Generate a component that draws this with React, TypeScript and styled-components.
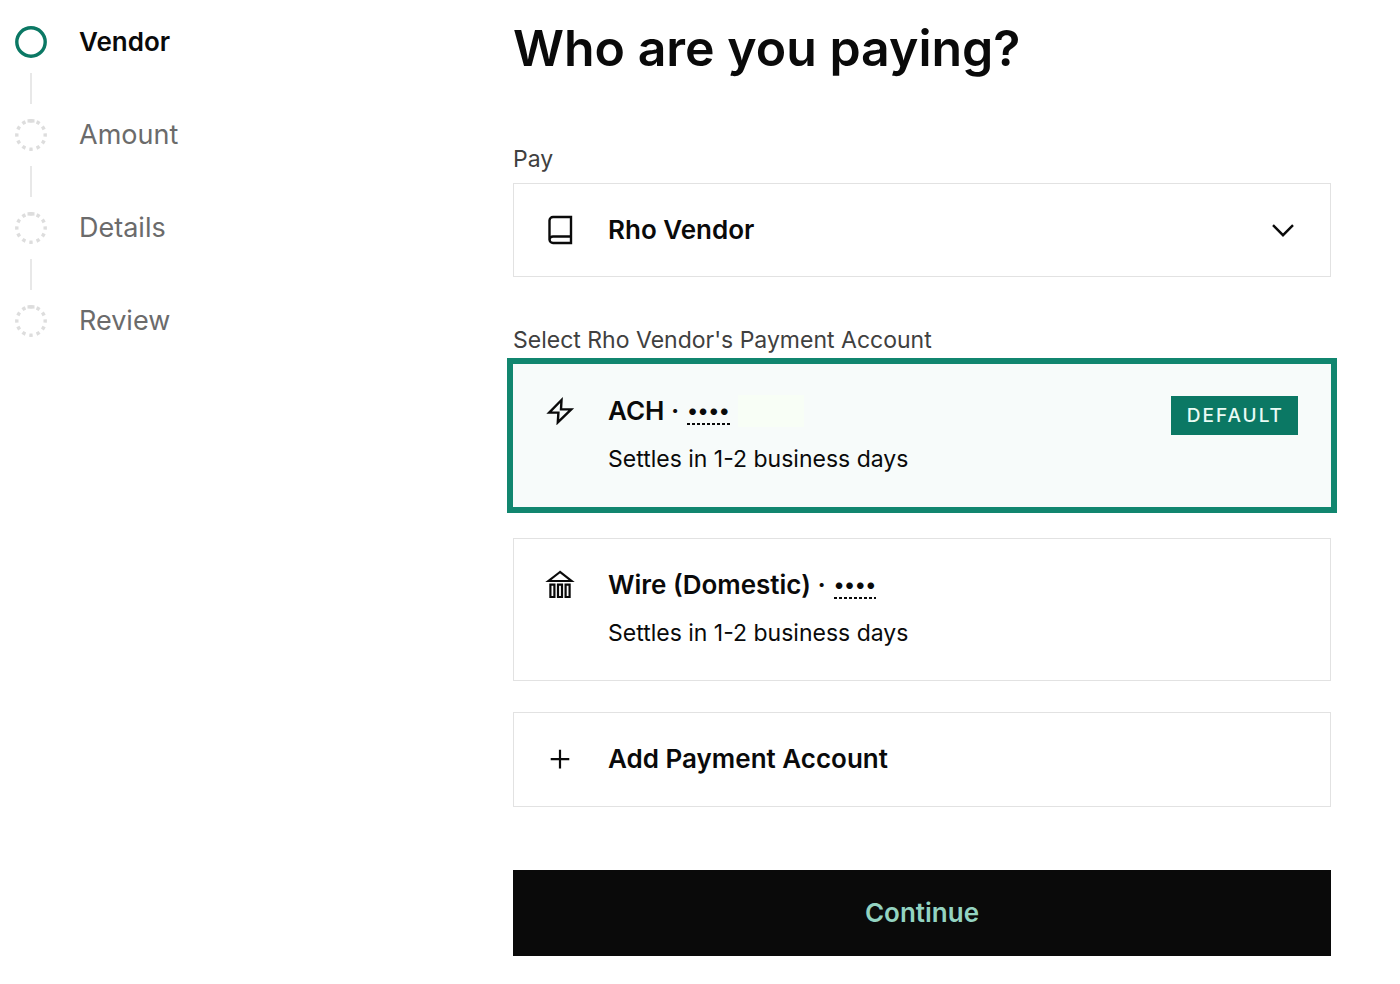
import React, { useState } from "react";
import styled, { createGlobalStyle } from "styled-components";

const GlobalStyle = createGlobalStyle`
  *, *::before, *::after { box-sizing: border-box; }
  body {
    margin: 0;
    background: #ffffff;
    color: #0a0a0a;
    font-family: Inter, "Liberation Sans", sans-serif;
  }
  button, input, select { font: inherit; color: inherit; }
`;

const Page = styled.div`
  display: grid;
  grid-template-columns: 498px minmax(0, 1fr);
  padding: 16px 69px 28px 15px;
`;

const Stepper = styled.ol`
  list-style: none;
  margin: 0;
  padding: 10px 0 0;
`;

const Step = styled.li<{ $current?: boolean }>`
  display: grid;
  grid-template-columns: 32px auto;
  column-gap: 32px;
  justify-content: start;
  align-items: center;
  font-size: ${(p) => (p.$current ? 26 : 27)}px;
  line-height: 32px;
  font-weight: ${(p) => (p.$current ? 600 : 400)};
  color: ${(p) => (p.$current ? "#0a0a0a" : "#6b6b6b")};
`;

const Connector = styled.span`
  width: 2px;
  height: 31px;
  margin: 15px;
  background: #e8e8e8;
`;

const Form = styled.form`
  display: flex;
  flex-direction: column;
`;

const Title = styled.h1`
  margin: 0 0 65px;
  font-size: 50px;
  line-height: 64px;
  font-weight: 600;
`;

const Caption = styled.label`
  margin-bottom: 10px;
  font-size: 23px;
  line-height: 28px;
  color: #404040;
`;

const Group = styled.fieldset`
  display: flex;
  flex-direction: column;
  gap: 31px;
  min-width: 0;
  margin: 49px 0 63px;
  padding: 0;
  border: 0;
`;

const GroupCaption = styled(Caption).attrs({ as: "legend" })`
  padding: 0;
`;

const panel = `
  display: flex;
  gap: 33px;
  border: 1px solid #e2e2e2;
  background: #ffffff;
  padding: 30px 32px 30px 31px;
`;

const SelectBox = styled.div`
  ${panel}
  align-items: center;
`;

const Select = styled.select`
  flex: 1;
  min-width: 0;
  appearance: none;
  border: 0;
  padding: 0;
  background: transparent;
  font-size: 26px;
  line-height: 32px;
  font-weight: 600;
`;

const AccountCard = styled.label<{ $selected: boolean }>`
  ${panel}
  padding-bottom: 31px;
  cursor: pointer;
  ${(p) =>
    p.$selected &&
    `
    border-color: transparent;
    background: #f7fbfa;
    box-shadow: 0 0 0 6px #11866f;
  `}
`;

const Radio = styled.input`
  position: absolute;
  opacity: 0;
  pointer-events: none;
`;

const AccountText = styled.span`
  flex: 1;
  display: flex;
  flex-direction: column;
  gap: 16px;
`;

const AccountName = styled.span`
  display: flex;
  align-items: center;
  gap: 8px;
  font-size: 26px;
  line-height: 32px;
  font-weight: 600;
`;

const Mask = styled.span`
  display: flex;
  height: 28px;
  align-items: center;
  font-size: 21px;
  background: repeating-linear-gradient(90deg, #0a0a0a 0 3px, transparent 3px 5px) left bottom / 100% 2px no-repeat;
`;

const Redacted = styled.span`
  width: 66px;
  height: 32px;
  background: #f8fef6;
`;

const Timing = styled.span`
  font-size: 23px;
  line-height: 32px;
`;

const Badge = styled.span`
  align-self: flex-start;
  padding: 0 14px 0 16px;
  margin-top: 1px;
  background: #0b7864;
  color: #e9fbf5;
  font-size: 19px;
  line-height: 39px;
  font-weight: 500;
  letter-spacing: 2px;
`;

const AddButton = styled.button`
  ${panel}
  align-items: center;
  padding-bottom: 31px;
  font-size: 26px;
  line-height: 32px;
  font-weight: 600;
  text-align: left;
  cursor: pointer;
`;

const ContinueButton = styled.button`
  border: 0;
  padding: 27px;
  background: #0a0a0a;
  color: #93d3c1;
  font-size: 26px;
  line-height: 32px;
  font-weight: 600;
  cursor: pointer;
`;

const IconSvg = styled.svg`
  flex: none;
  width: 30px;
  height: 30px;
  fill: none;
  stroke: currentColor;
  stroke-width: 2;
`;

const Icon = ({ children }: { children: React.ReactNode }) => (
  <IconSvg viewBox="0 0 30 30" aria-hidden="true">
    {children}
  </IconSvg>
);

const BookIcon = () => (
  <Icon>
    <path
      strokeWidth="2.4"
      d="M4.5 25a3.5 3.5 0 0 1 3.5-3.5h18M8 2h18V28H8a3.5 3.5 0 0 1-3.5-3.5V5.5A3.5 3.5 0 0 1 8 2z"
    />
  </Icon>
);

const ChevronIcon = () => (
  <Icon>
    <path strokeWidth="2.4" d="M5 10.2 15 20.2 25 10.2" />
  </Icon>
);

const BoltIcon = () => (
  <Icon>
    <path strokeWidth="2.4" d="M16.5 5 4.2 17.6H13.4L12.8 27.4 26.2 14.4H16z" />
  </Icon>
);

const BankIcon = () => (
  <Icon>
    <path strokeWidth="2.2" d="M15 3 3.5 12H26.5z" />
    <path strokeWidth="2.2" d="M5.4 15.6h4v12.4h-4zM13 15.6h4v12.4h-4zM20.6 15.6h4v12.4h-4z" />
  </Icon>
);

const PlusIcon = () => (
  <Icon>
    <path strokeWidth="2.2" d="M15 5.8v18.6M5.7 15.1h18.6" />
  </Icon>
);

const StepMark = ({ current }: { current: boolean }) => (
  <svg width="32" height="32" viewBox="0 0 32 32" fill="none" aria-hidden="true">
    {current ? (
      <circle cx="16" cy="16" r="14.2" stroke="#0b7864" strokeWidth="3.4" />
    ) : (
      <>
        <circle
          cx="16"
          cy="16"
          r="14.2"
          stroke="#dddddd"
          strokeWidth="3.4"
          pathLength="360"
          strokeDasharray="14 16"
          strokeDashoffset="7"
        />
        <path d="M12.5 1.9h7" stroke="#dddddd" strokeWidth="3.4" />
      </>
    )}
  </svg>
);

const steps = ["Vendor", "Amount", "Details", "Review"];

const accounts = [
  { id: "ach", name: "ACH", icon: <BoltIcon />, isDefault: true },
  { id: "wire", name: "Wire (Domestic)", icon: <BankIcon />, isDefault: false },
];

export default function App() {
  const [account, setAccount] = useState("ach");

  return (
    <>
      <GlobalStyle />
      <Page>
        <nav aria-label="Progress">
          <Stepper>
            {steps.map((name, i) => (
              <Step key={name} $current={i === 0} aria-current={i === 0 ? "step" : undefined}>
                <StepMark current={i === 0} />
                <span>{name}</span>
                {i < steps.length - 1 && <Connector />}
              </Step>
            ))}
          </Stepper>
        </nav>

        <Form onSubmit={(e) => e.preventDefault()}>
          <Title>Who are you paying?</Title>

          <Caption htmlFor="vendor">Pay</Caption>
          <SelectBox>
            <BookIcon />
            <Select id="vendor">
              <option>Rho Vendor</option>
            </Select>
            <ChevronIcon />
          </SelectBox>

          <Group>
            <GroupCaption>Select Rho Vendor's Payment Account</GroupCaption>
            {accounts.map((a) => (
              <AccountCard key={a.id} $selected={account === a.id}>
                <Radio
                  type="radio"
                  name="account"
                  value={a.id}
                  checked={account === a.id}
                  onChange={() => setAccount(a.id)}
                />
                {a.icon}
                <AccountText>
                  <AccountName>
                    <span>{a.name} ·</span>
                    <Mask>••••</Mask>
                    {a.isDefault && <Redacted />}
                  </AccountName>
                  <Timing>Settles in 1-2 business days</Timing>
                </AccountText>
                {a.isDefault && <Badge>DEFAULT</Badge>}
              </AccountCard>
            ))}
            <AddButton type="button">
              <PlusIcon />
              Add Payment Account
            </AddButton>
          </Group>

          <ContinueButton type="submit">Continue</ContinueButton>
        </Form>
      </Page>
    </>
  );
}
